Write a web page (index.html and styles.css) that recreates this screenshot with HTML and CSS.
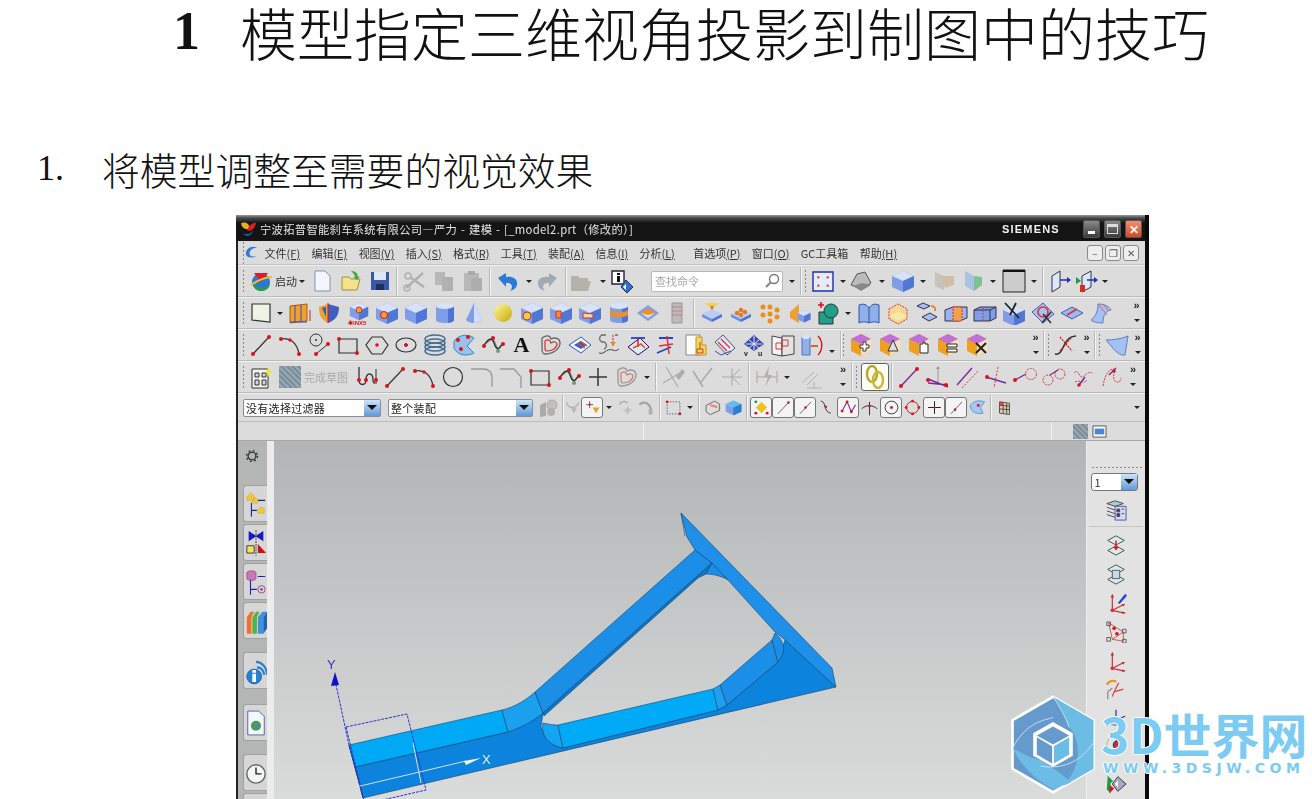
FILE: index.html
```html
<!DOCTYPE html>
<html lang="zh-CN">
<head>
    <meta charset="UTF-8">
    <title>模型指定三维视角投影到制图中的技巧</title>
    <link rel="stylesheet" href="styles.css">
</head>
<body>
<svg class="defs" width="0" height="0">
    <defs>
        <linearGradient id="ball" x1="0" y1="0" x2="1" y2="1"><stop offset="0" stop-color="#fff6a0"/><stop offset="1" stop-color="#c8a800"/></linearGradient>
    </defs>
    <symbol id="cube" viewBox="0 0 24 24"><path d="M12 2l11 5v11l-11 5-11-5V7z" fill="#7f9de8"/><path d="M12 2l11 5-11 5-11-5z" fill="#d8e3fb"/><path d="M12 12l11-5v11l-11 5z" fill="#5077d6"/></symbol>
    <symbol id="cyl" viewBox="0 0 24 24"><path d="M3 5v14c0 4 18 4 18 0V5z" fill="#7f9de8"/><path d="M15 5v17c3-.4 6-1.500 6-3V5z" fill="#4f73d4"/><ellipse cx="12" cy="5" rx="9" ry="3" fill="#d8e3fb"/></symbol>
    <symbol id="slab" viewBox="0 0 24 24"><path d="M2 16l10-5 10 5-10 5z" fill="#b9cdf6"/><path d="M2 16v3l10 5v-3z" fill="#6f8fdf"/><path d="M22 16v3l-10 5v-3z" fill="#4f73d4"/></symbol>
    <symbol id="line" viewBox="0 0 24 24"><path d="M4 21L20 4" stroke="#333" stroke-width="1.200" fill="none"/><circle cx="4" cy="21" r="2" fill="#d8141c"/><circle cx="20" cy="4" r="2" fill="#d8141c"/></symbol>
    <symbol id="arc" viewBox="0 0 24 24"><path d="M3 6c8-2 16 3 18 15" stroke="#333" stroke-width="1.200" fill="none"/><circle cx="3" cy="6" r="2" fill="#d8141c"/><circle cx="12" cy="7" r="1.700" fill="#d8141c"/><circle cx="21" cy="21" r="2" fill="#d8141c"/></symbol>
    <symbol id="rect" viewBox="0 0 24 24"><path d="M3 6h18v14H3z" stroke="#333" stroke-width="1.200" fill="none"/><circle cx="3" cy="6" r="2" fill="#d8141c"/><circle cx="21" cy="20" r="2" fill="#d8141c"/></symbol>
    <symbol id="spline" viewBox="0 0 24 24"><path d="M2 13L12 5l5 12 5-6" stroke="#8b8b8b" stroke-width="1.200" fill="none"/><path d="M3 12c5-7 8-8 10-2s4 8 8 1" stroke="#222" stroke-width="1.200" fill="none"/><circle cx="3" cy="13" r="2" fill="#d8141c"/><circle cx="12" cy="5" r="2" fill="#d8141c"/><circle cx="17" cy="18" r="2" fill="#6aa06a"/><circle cx="22" cy="11" r="2" fill="#d8141c"/></symbol>
    <symbol id="heart" viewBox="0 0 24 24"><path d="M3 5c4-3 8-3 9 1 4-2 9-1 9 4 0 6-7 11-15 11-3 0-3-3-3-6z" fill="none" stroke="#666" stroke-width="1.300"/><path d="M6 8c3-2 5-1 6 2 3-2 6-1 6 1 0 4-5 7-10 7-2 0-2-2-2-4z" fill="none" stroke="#c33" stroke-width="1.200"/></symbol>
    <symbol id="cubeO" viewBox="0 0 24 24"><path d="M12 1l10 5v12l-10 5-10-5V6z" fill="#f0a020"/><path d="M12 1l10 5-10 5L2 6z" fill="#c070d8"/><path d="M12 11l10-5v12l-10 5z" fill="#f6e2c0"/></symbol>
    <symbol id="axes" viewBox="0 0 24 24"><path d="M8 20V5M8 20l12-6M8 20l13 3" stroke="#c8323c" stroke-width="1.300" fill="none"/><circle cx="8" cy="20" r="2" fill="#c8323c"/><path d="M8 2l-2 4h4zM22 13l-4 0 2 3zM23 23l-4-2v3z" fill="#c8323c"/></symbol>
    <symbol id="plane2" viewBox="0 0 24 24"><path d="M3 7l9-5 9 5-9 5zM3 18l9-5 9 5-9 5z" fill="#d6efe4" stroke="#445"/></symbol>
</svg>

<div class="page">
    <h1 class="doc-title"><span class="doc-num">1</span><span>模型指定三维视角投影到制图中的技巧</span></h1>
    <h2 class="doc-step"><span class="step-num">1.</span><span>将模型调整至需要的视觉效果</span></h2>

    <div class="nx">
        <div class="titlebar">
            <svg class="logo" viewBox="0 0 18 16"><path d="M1 2c5-2 9 0 9 6-5 1-8-1-9-6z" fill="#e8b020"/><path d="M17 1c-1 6-4 9-9 9 0-5 4-8 9-9z" fill="#d8201c"/><path d="M3 12c4 3 8 2 11-3-2 7-8 8-11 3z" fill="#2a70d0"/></svg>
            <span class="title-text">宁波拓普智能刹车系统有限公司—严力 - 建模 - [_model2.prt（修改的）]</span>
            <span class="siemens">SIEMENS</span>
            <span class="winbtn"><i class="g-min"></i></span>
            <span class="winbtn"><i class="g-max"></i></span>
            <span class="winbtn close">✕</span>
        </div>

        <div class="menubar">
            <span class="grip"></span>
            <svg class="menu-logo" viewBox="0 0 16 16"><path d="M14 3c-6-3-12 1-12 6 0 4 5 6 12 3-5 1-8 0-8-3 0-3 3-6 8-6z" fill="#3478d8"/></svg>
            <span class="m">文件<u>(F)</u></span>
            <span class="m">编辑<u>(E)</u></span>
            <span class="m">视图<u>(V)</u></span>
            <span class="m">插入<u>(S)</u></span>
            <span class="m">格式<u>(R)</u></span>
            <span class="m">工具<u>(T)</u></span>
            <span class="m">装配<u>(A)</u></span>
            <span class="m">信息<u>(I)</u></span>
            <span class="m">分析<u>(L)</u></span>
            <span class="m m-gap">首选项<u>(P)</u></span>
            <span class="m">窗口<u>(O)</u></span>
            <span class="m">GC工具箱</span>
            <span class="m">帮助<u>(H)</u></span>
            <span class="mdi"><span class="mdi-btn">–</span><span class="mdi-btn">❐</span><span class="mdi-btn">✕</span></span>
        </div>

        <div class="bar">
            <span class="grip"></span>
            <svg class="i" viewBox="0 0 24 24"><circle cx="12" cy="13" r="9" fill="#2a78d0"/><path d="M3 13c3 6 12 8 18 2-1 6-6 7-9 7-5 0-8-4-9-9z" fill="#2e9a50"/><path d="M5 4h14l-7 9z" fill="#d8202c"/><path d="M2 16C8 12 16 8 23 8" stroke="#f0c020" stroke-width="2" fill="none"/></svg>
            <span class="btn-label">启动</span><span class="caret nar"></span>
            <svg class="i" viewBox="0 0 24 24"><path d="M5 2h10l5 5v15H5z" fill="#f4f6ff" stroke="#8090c0"/></svg>
            <svg class="i" viewBox="0 0 24 24"><path d="M3 8h7l2 2h9l-3 11H3z" fill="#f2e28a" stroke="#a09040"/><path d="M12 2c4 0 7 2 7 6l2-1-3 4-4-3h2c0-2-2-4-4-6z" fill="#46a840"/></svg>
            <svg class="i" viewBox="0 0 24 24"><path d="M3 3h18v18H3z" fill="#3858a8"/><path d="M6 3h12v8H6z" fill="#dfe8f8"/><path d="M8 15h8v6H8z" fill="#20305c"/></svg>
            <span class="sep"></span>
            <svg class="i dim" viewBox="0 0 24 24"><path d="M3 19L20 4M7 8l14 10" stroke="#777" stroke-width="2.400" fill="none"/><circle cx="4" cy="19" r="3" fill="none" stroke="#777" stroke-width="1.500"/><circle cx="5" cy="7" r="3" fill="none" stroke="#777" stroke-width="1.500"/></svg>
            <svg class="i dim" viewBox="0 0 24 24"><path d="M3 3h10v13H3z" fill="#888"/><path d="M10 8h11v14H10z" fill="#777"/></svg>
            <svg class="i dim" viewBox="0 0 24 24"><path d="M3 4h15v18H3z" fill="#888"/><path d="M7 2h7v4H7z" fill="#666"/><path d="M10 9h11v13H10z" fill="#6f6f6f"/></svg>
            <span class="sep"></span>
            <svg class="i tight m-x3" viewBox="0 0 24 24"><path d="M2 9l8-5v4c7-1 12 2 11 8-1 3-3 5-7 6 3-3 3-9-4-8v4z" fill="#2a7ad8"/></svg>
            <span class="caret"></span>
            <svg class="i tight dim m-r4" viewBox="0 0 24 24"><path d="M22 9l-8-5v4C7 7 2 10 3 16c1 3 3 5 7 6-3-3-3-9 4-8v4z" fill="#3a6a90"/></svg>
            <span class="sep"></span>
            <svg class="i tight dim m-r4" viewBox="0 0 24 24"><path d="M2 7h7l2 2h8v3h3l-3 10H2z" fill="#7d7a58"/></svg>
            <span class="caret"></span>
            <svg class="i tight m-l1" viewBox="0 0 24 24"><path d="M2 2h12v13H2z" fill="#fff" stroke="#223" stroke-width="1.400"/><path d="M7 4h3v2H7zM7 7h3v6H7z" fill="#111"/><path d="M16 11l7 7-6 6-6-6z" fill="#2e6fd8" stroke="#234"/><path d="M16 15l-3 3 3 3z" fill="#fff"/></svg>
            <span class="search"><span>查找命令</span><svg class="mag" viewBox="0 0 16 16"><circle cx="10" cy="6" r="4.500" fill="#fff" stroke="#777" stroke-width="1.400"/><path d="M7 9l-5 5" stroke="#888" stroke-width="2.200"/></svg></span>
            <span class="caret m-l3"></span>
            <span class="sep"></span>
            <span class="grip"></span>
            <svg class="i" viewBox="0 0 24 24"><path d="M2 3h20v19H2z" fill="#e4ecfb" stroke="#2030a0" stroke-width="1.400"/><path d="M6 7l3 1-2 2zM18 7l-3 1 2 2zM6 18l3-1-2-2zM18 18l-3-1 2-2z" fill="#d82c1c"/></svg>
            <span class="caret"></span>
            <svg class="i tight m-r3" viewBox="0 0 24 24"><path d="M2 16L8 5l8-2 6 11-10 6z" fill="#bbb" stroke="#555"/><path d="M4 17l8 5 10-6-9-2z" fill="#888"/></svg>
            <span class="caret"></span>
            <svg class="i" viewBox="0 0 24 24"><use href="#cube"/></svg>
            <span class="caret"></span>
            <svg class="i dim" viewBox="0 0 24 24"><path d="M3 3l9 4v14l-9-4z" fill="#b0a080"/><path d="M10 7h12v9l-9 3z" fill="#f09020"/></svg>
            <svg class="i dim2" viewBox="0 0 24 24"><path d="M4 2l9 5v15l-9-5z" fill="#8eb0e8"/><path d="M13 7l8 1v8l-8 6z" fill="#40b060"/></svg>
            <span class="caret"></span>
            <svg class="i" viewBox="0 0 24 24"><path d="M1 1h22v22H1z" fill="#ccc" stroke="#222"/><path d="M1 1h22v2H1z" fill="#111"/></svg>
            <span class="caret"></span>
            <span class="sep"></span>
            <svg class="i" viewBox="0 0 24 24"><path d="M3 7l8-5v16l-8 5z" fill="#dbe8fb" stroke="#334"/><path d="M11 11h9" stroke="#1c2cc8" stroke-width="1.500"/><path d="M22 11l-4-3v6z" fill="#1c2cc8"/></svg>
            <svg class="i tight" viewBox="0 0 24 24"><path d="M7 7l9-5v16l-9 5z" fill="#dbe8fb" stroke="#334"/><path d="M1 8l5 4-5 3z" fill="#1c9c3c"/><path d="M5 16h5v7H5z" fill="#d82c1c"/><path d="M12 11h8" stroke="#1c2cc8" stroke-width="1.500"/><path d="M23 11l-4-3v6z" fill="#1c2cc8"/></svg>
            <span class="caret"></span>
        </div>

        <div class="bar">
            <span class="grip"></span>
            <svg class="i" viewBox="0 0 24 24"><path d="M3 3h18v18L3 19z" fill="#eef3e8" stroke="#333" stroke-width="1.200"/></svg>
            <span class="caret nar"></span>
            <svg class="i" viewBox="0 0 24 24"><path d="M2 5l17-2v17L2 22z" fill="#f0a030" stroke="#a06010"/><path d="M7 4v18M13 4v17M2 21h17" stroke="#3a4cb0"/><path d="M22 20V9" stroke="#d8141c"/></svg>
            <svg class="i" viewBox="0 0 24 24"><path d="M2 6l9-3v19c-7-3-9-8-9-16z" fill="#f0a030"/><path d="M11 3l11 3c0 8-3 13-11 16z" fill="#4060c0"/><path d="M11 2v20" stroke="#d8141c"/><path d="M5 7l4-1v10z" fill="#2a60c0"/></svg>
            <svg class="i" viewBox="0 0 24 24"><use href="#cube" width="20" height="20" x="3" y="0"/><circle cx="13" cy="9" r="3" fill="#f0a030" stroke="#c33"/><text x="2" y="23.500" class="nx5">✱|NX5</text></svg>
            <svg class="i" viewBox="0 0 24 24"><use href="#cube"/><circle cx="9" cy="14" r="3.500" fill="#f0a030" stroke="#d8141c"/></svg>
            <svg class="i" viewBox="0 0 24 24"><use href="#cube"/></svg>
            <svg class="i" viewBox="0 0 24 24"><use href="#cyl"/></svg>
            <svg class="i" viewBox="0 0 24 24"><path d="M12 2l8 17c-3 4-13 4-16 0z" fill="#7f9de8"/><path d="M12 2l8 17c-2 2-5 3-8 3z" fill="#cfdcfa"/></svg>
            <svg class="i" viewBox="0 0 24 24"><circle cx="12" cy="12" r="9" fill="url(#ball)"/></svg>
            <svg class="i" viewBox="0 0 24 24"><use href="#cube"/><circle cx="7" cy="15" r="4" fill="#f0d040" stroke="#c33"/></svg>
            <svg class="i" viewBox="0 0 24 24"><use href="#cube"/><path d="M7 10h5v7H7z" fill="#f09020" stroke="#c33"/></svg>
            <svg class="i" viewBox="0 0 24 24"><use href="#cube"/><path d="M5 12l10 1v4H5z" fill="#f6d8a0" stroke="#c33"/></svg>
            <svg class="i" viewBox="0 0 24 24"><use href="#cyl"/><path d="M3 9c3 3 15 3 18 0v5c-3 3-15 3-18 0z" fill="#e89030"/></svg>
            <svg class="i" viewBox="0 0 24 24"><path d="M1 12l11-8 11 8-11 8z" fill="#7f9de8"/><path d="M5 12l7-5 7 5-7 5z" fill="#f09020"/><path d="M5 12l7 2 7-2-7 5z" fill="#d8e3fb"/></svg>
            <svg class="i dim3" viewBox="0 0 24 24"><path d="M7 2h10v20H7z" fill="#b4b4b4" stroke="#888"/><path d="M7 6h10M7 10h10M7 14h10" stroke="#c66"/></svg>
            <span class="sep"></span>
            <svg class="i" viewBox="0 0 24 24"><path d="M5 2h14l-5 4h-4z" fill="#f6cf50"/><path d="M12 5v10" stroke="#e8641c" stroke-width="2.400"/><use href="#slab" y="-3"/></svg>
            <svg class="i" viewBox="0 0 24 24"><use href="#slab" y="-3"/><circle cx="8" cy="12" r="2.200" fill="#e87820"/><circle cx="12" cy="9" r="2.200" fill="#e87820"/><circle cx="12" cy="14" r="2.200" fill="#e87820"/><circle cx="16" cy="11" r="2.200" fill="#e87820"/></svg>
            <svg class="i" viewBox="0 0 24 24"><circle cx="5" cy="6" r="2.500" fill="#e89020"/><circle cx="12" cy="6" r="2.500" fill="#e89020"/><circle cx="19" cy="9" r="2.500" fill="#e89020"/><circle cx="5" cy="14" r="2.500" fill="#e89020"/><circle cx="12" cy="13" r="2.500" fill="#e89020"/><circle cx="19" cy="16" r="2.500" fill="#e89020"/><circle cx="12" cy="20" r="2.500" fill="#e89020"/></svg>
            <svg class="i" viewBox="0 0 24 24"><path d="M3 11l9-8v19l-9-5z" fill="#f0a030"/><use href="#cube" width="14" height="14" x="10" y="8"/></svg>
            <svg class="i" viewBox="0 0 24 24"><path d="M3 11h14v12H3z" fill="#20a088" stroke="#333"/><circle cx="15" cy="10" r="7" fill="#20a088" stroke="#333"/><path d="M5 1v6M2 4h6" stroke="#d8141c" stroke-width="1.600"/></svg>
            <span class="caret"></span>
            <svg class="i" viewBox="0 0 24 24"><path d="M2 4c5-2 8 0 10 3 2-3 5-5 10-3v18c-4-2-8-1-10 0-2-1-6-2-10 0z" fill="#8fb0e8" stroke="#2a50b0"/><path d="M12 7v15" stroke="#2a50b0"/></svg>
            <svg class="i" viewBox="0 0 24 24"><path d="M3 8l9-5 9 5v10l-9 5-9-5z" fill="#f6d890" stroke="#d03838" stroke-dasharray="2 1"/><path d="M3 15l9-4 9 4-9 5z" fill="#f8e8a8"/></svg>
            <svg class="i" viewBox="0 0 24 24"><path d="M2 5l6-3 7 3-6 3z" fill="#a8c0f0" stroke="#334"/><path d="M7 16l8-4 7 4-8 4z" fill="#a8c0f0" stroke="#334"/><path d="M16 5c3 0 5 2 4 5" stroke="#e88020" stroke-width="1.800" fill="none"/></svg>
            <svg class="i" viewBox="0 0 24 24"><path d="M1 9l8-3h14v11l-8 3H1z" fill="#9cb4ec" stroke="#334"/><path d="M9 6h9v14H9z" fill="#f0a050" stroke="#c33" stroke-dasharray="2 1"/></svg>
            <svg class="i" viewBox="0 0 24 24"><path d="M1 9l6-3h16v11l-6 3H1z" fill="#7f9de8" stroke="#334"/><path d="M1 9h16v11M17 9l6-3" stroke="#334" fill="none"/><path d="M10 6v14" stroke="#d03838" stroke-dasharray="2 1"/></svg>
            <svg class="i" viewBox="0 0 24 24"><use href="#cube" y="2"/><path d="M3 2l14 15M14 2L8 14" stroke="#222" stroke-width="1.800"/></svg>
            <svg class="i" viewBox="0 0 24 24"><path d="M1 11l11-9 11 11-11 9z" fill="#aac0f0" stroke="#4060b0"/><circle cx="12" cy="11" r="5" fill="none" stroke="#e03030" stroke-width="1.600"/><path d="M12 13l8 9M20 11l-9 11" stroke="#333" stroke-width="1.600"/></svg>
            <svg class="i" viewBox="0 0 24 24"><path d="M1 12l11-6 11 6-11 6z" fill="#9cb8f0" stroke="#4060b0"/><path d="M7 14l10-6" stroke="#e03030" stroke-width="1.600"/></svg>
            <svg class="i" viewBox="0 0 24 24"><path d="M9 3c6 0 11 2 13 6-6 1-8 6-8 13-5 0-10-1-12-3 5-4 7-9 7-16z" fill="#a4c0f4" stroke="#6080c0"/><path d="M9 3l9 11M14 3l5 6" stroke="#e0605c"/></svg>
            <span class="chev end"><b>»</b><em></em></span>
        </div>

        <div class="bar">
            <span class="grip"></span>
            <svg class="i" viewBox="0 0 24 24"><use href="#line"/></svg>
            <svg class="i" viewBox="0 0 24 24"><use href="#arc"/></svg>
            <svg class="i" viewBox="0 0 24 24"><circle cx="9" cy="7" r="6" fill="none" stroke="#333"/><circle cx="9" cy="7" r="1" fill="#333"/><path d="M9 21L21 11" stroke="#333"/><circle cx="9" cy="21" r="2" fill="#d8141c"/><circle cx="21" cy="11" r="2" fill="#d8141c"/></svg>
            <svg class="i" viewBox="0 0 24 24"><use href="#rect"/></svg>
            <svg class="i" viewBox="0 0 24 24"><path d="M7 4h10l6 8-6 9H7l-6-9z" fill="none" stroke="#333" stroke-width="1.200"/><circle cx="12" cy="12" r="1.800" fill="#d8141c"/></svg>
            <svg class="i" viewBox="0 0 24 24"><ellipse cx="12" cy="12" rx="10" ry="7" fill="none" stroke="#333" stroke-width="1.200"/><path d="M10 12h4M12 10v4" stroke="#d8141c" stroke-width="2"/></svg>
            <svg class="i" viewBox="0 0 24 24"><ellipse cx="12" cy="6" rx="10" ry="4" fill="none" stroke="#456e90" stroke-width="1.500"/><ellipse cx="12" cy="10" rx="10" ry="4" fill="none" stroke="#456e90" stroke-width="1.500"/><ellipse cx="12" cy="14" rx="10" ry="4" fill="none" stroke="#456e90" stroke-width="1.500"/><ellipse cx="12" cy="18" rx="10" ry="4" fill="none" stroke="#456e90" stroke-width="1.500"/></svg>
            <svg class="i" viewBox="0 0 24 24"><path d="M2 8c6-7 14-7 20-3l-7 8 7 7c-8 4-17 2-20-5z" fill="#9cc0ec" stroke="#2890c0"/><circle cx="6" cy="7" r="2" fill="#d8141c"/><circle cx="16" cy="4" r="2" fill="#d8141c"/><circle cx="9" cy="16" r="2" fill="#d8141c"/></svg>
            <svg class="i" viewBox="0 0 24 24"><use href="#spline"/></svg>
            <span class="letter">A</span>
            <svg class="i" viewBox="0 0 24 24"><use href="#heart"/></svg>
            <svg class="i" viewBox="0 0 24 24"><path d="M1 12L13 4l10 8-10 8z" fill="#f4f4ff" stroke="#2a60c0"/><path d="M6 12l7-4 6 4-6 4z" fill="#2a60c0"/><path d="M9 10l8 5M12 8l7 5" stroke="#e8502c" stroke-width="1.400"/></svg>
            <svg class="i" viewBox="0 0 24 24"><path d="M2 20c6 2 6-5 14-3 2 1 3 1 6-1" fill="none" stroke="#444"/><path d="M9 2H5c-3 0-3 7 0 7h2c3 0 3 7 0 7" fill="none" stroke="#333"/><path d="M16 2v11" stroke="#d8141c" stroke-dasharray="2 1"/><path d="M13 9h6l-3 4z" fill="#e89020"/><path d="M18 2h3" stroke="#333"/></svg>
            <svg class="i" viewBox="0 0 24 24"><path d="M2 14l12-9 9 9-11 8z" fill="#d8ecf2" stroke="#406"/><path d="M5 5h14" stroke="#2244cc" stroke-width="1.800"/><path d="M12 5v9" stroke="#d8141c" stroke-width="1.400"/><path d="M7 15l8-4 4 4" stroke="#e8502c" stroke-width="1.600" fill="none"/></svg>
            <svg class="i" viewBox="0 0 24 24"><path d="M4 5h14M2 20l14-6" stroke="#2244cc" stroke-width="1.800"/><path d="M4 13l14-2M12 3l2 18" stroke="#e03030" stroke-width="1.500"/></svg>
            <svg class="i" viewBox="0 0 24 24"><path d="M2 2h14v20H2z" fill="#fdfdfd" stroke="#888"/><path d="M12 4h6v8h4v10H12z" fill="#f0dc50" stroke="#c84"/><path d="M13 16h6v4h-6zM16 9v7" stroke="#d03838" fill="none"/></svg>
            <svg class="i" viewBox="0 0 24 24"><path d="M2 9l8-7 12 13-8 7z" fill="#dce8f8" stroke="#556"/><path d="M5 9l9 9M8 6l9 9" stroke="#e03030" stroke-width="1.300"/><path d="M2 18l6 4 10-4" stroke="#4050a0" fill="none"/></svg>
            <svg class="i" viewBox="0 0 24 24"><path d="M2 11l10-9 10 9-10 7z" fill="#3848a8"/><path d="M4 11l16 0M7 7l10 8M12 3v14M17 7L7 15" stroke="#e8e8ff"/><text x="2" y="22.500" class="uv">v</text><text x="16" y="22.500" class="uv">u</text></svg>
            <svg class="i" viewBox="0 0 24 24"><path d="M1 3l10 2v18L1 21z" fill="#f4f4f4" stroke="#444"/><path d="M11 3h12v18l-12 2z" fill="#e4e4e4" stroke="#444"/><path d="M5 10h6v6H5zM11 7h6v6h-6z" fill="none" stroke="#d03838"/></svg>
            <svg class="i" viewBox="0 0 24 24"><path d="M2 4h8v18H2z" fill="#8fb0e8" stroke="#5070c0"/><ellipse cx="6" cy="4" rx="4" ry="2" fill="#d8e3fb"/><path d="M11 13h7" stroke="#e86020" stroke-width="2"/><path d="M18 3c5 5 5 14 0 19" stroke="#d8141c" fill="none" stroke-width="1.400"/></svg>
            <span class="caret low"></span>
            <span class="sep pull"></span>
            <span class="grip"></span>
            <svg class="i" viewBox="0 0 24 24"><use href="#cubeO"/><path d="M14 9h3v3h3v3h-3v3h-3v-3h-3v-3h3z" fill="#fff" stroke="#333"/></svg>
            <svg class="i" viewBox="0 0 24 24"><use href="#cubeO"/><path d="M15 7l5 11h-10z" fill="#ddd" stroke="#333"/></svg>
            <svg class="i" viewBox="0 0 24 24"><use href="#cubeO"/><path d="M13 11h3v-2h2v2h3v9h-8z" fill="#fff" stroke="#222"/></svg>
            <svg class="i" viewBox="0 0 24 24"><use href="#cubeO"/><path d="M11 11h10v3H11zM11 16h10v3H11z" fill="#fff" stroke="#222"/></svg>
            <svg class="i" viewBox="0 0 24 24"><use href="#cubeO"/><path d="M11 10l10 10M21 10L11 20" stroke="#222" stroke-width="2"/></svg>
            <span class="chev far"><b>»</b><em></em></span>
            <span class="sep"></span>
            <span class="grip"></span>
            <svg class="i" viewBox="0 0 24 24"><path d="M1 21c10 2 6-17 21-18" fill="none" stroke="#333" stroke-width="1.500"/><path d="M6 4l12 14M6 18L18 4" stroke="#d8141c" stroke-dasharray="2 1" stroke-width="1.200"/></svg>
            <span class="chev"><b>»</b><em></em></span>
            <span class="sep"></span>
            <span class="grip"></span>
            <svg class="i" viewBox="0 0 24 24"><path d="M1 7c7 0 15-1 22-4l-3 19c-5 1-10-4-13-8z" fill="#a4c0f4" stroke="#6080c0"/></svg>
            <span class="chev"><b>»</b><em></em></span>
        </div>

        <div class="bar">
            <span class="grip"></span>
            <svg class="i" viewBox="0 0 24 24"><path d="M3 4h16v19H3z" fill="#f4f4e8" stroke="#333"/><path d="M6 8h4v4H6zM13 8h4v4h-4zM6 15h4v5H6zM13 15h4v5h-4z" fill="#d0d8e0" stroke="#333"/><path d="M19 2l2 4 3 1-3 1-2 4-1-4-3-1 3-1z" fill="#f4e030"/></svg>
            <span class="sq-done"></span>
            <span class="done-label">完成草图</span>
            <svg class="i tight" viewBox="0 0 24 24"><path d="M3 2v13c0 6 7 6 7 0 0-8 7-8 7 0 0 3 2 3 2 3" fill="none" stroke="#333" stroke-width="1.300"/><path d="M20 4v15" stroke="#333"/><circle cx="3" cy="15" r="2" fill="#d8141c"/><circle cx="10" cy="15" r="2" fill="#d8141c"/><circle cx="20" cy="15" r="2" fill="#d8141c"/></svg>
            <svg class="i" viewBox="0 0 24 24"><use href="#line"/></svg>
            <svg class="i" viewBox="0 0 24 24"><use href="#arc"/></svg>
            <svg class="i" viewBox="0 0 24 24"><circle cx="12" cy="12" r="9.500" fill="none" stroke="#333" stroke-width="1.200"/></svg>
            <svg class="i" viewBox="0 0 24 24"><path d="M1 4h12c6 0 9 3 9 9v9" fill="none" stroke="#999" stroke-width="1.300"/></svg>
            <svg class="i" viewBox="0 0 24 24"><path d="M1 4h14l7 8v11" fill="none" stroke="#999" stroke-width="1.300"/></svg>
            <svg class="i" viewBox="0 0 24 24"><use href="#rect"/></svg>
            <svg class="i" viewBox="0 0 24 24"><use href="#spline"/></svg>
            <svg class="i" viewBox="0 0 24 24"><path d="M12 3v18M3 12h18" stroke="#333" stroke-width="1.500"/></svg>
            <svg class="i dim2" viewBox="0 0 24 24"><use href="#heart"/></svg>
            <span class="caret"></span>
            <span class="sep"></span>
            <svg class="i dim" viewBox="0 0 24 24"><path d="M4 2l12 20M1 18L18 8" stroke="#666" stroke-width="1.200"/><path d="M14 12l6-8 3 3-6 8z" fill="#667a40"/></svg>
            <svg class="i dim" viewBox="0 0 24 24"><path d="M2 6l10 16M10 17L21 3" stroke="#666" stroke-width="1.600"/></svg>
            <svg class="i dim" viewBox="0 0 24 24"><path d="M12 3v18M2 12h20M12 12l8-8M12 12l8 8" stroke="#666"/></svg>
            <span class="sep"></span>
            <svg class="i dim" viewBox="0 0 24 24"><path d="M2 6v12M22 6v12M2 12h20" stroke="#a44" fill="none"/><path d="M14 1l-5 11h4l-3 10 7-12h-4z" fill="#777"/></svg>
            <span class="caret"></span>
            <svg class="i dim push-a" viewBox="0 0 24 24"><path d="M3 18L15 7M8 20L19 9M8 23h15M15 17v6" stroke="#777" fill="none"/></svg>
            <span class="chev near"><b>»</b><em></em></span>
            <span class="sep"></span>
            <span class="grip"></span>
            <span class="link-btn"><svg class="i" viewBox="0 0 24 24"><ellipse cx="9" cy="9" rx="5" ry="8" fill="none" stroke="#b8a828" stroke-width="2.400"/><ellipse cx="15" cy="15" rx="5" ry="8" fill="none" stroke="#c8b838" stroke-width="2.400"/></svg></span>
            <span class="sep"></span>
            <svg class="i" viewBox="0 0 24 24"><path d="M4 21L20 4" stroke="#7a2a9a" stroke-width="1.400"/><circle cx="4" cy="21" r="2" fill="#d8141c"/><circle cx="20" cy="4" r="2" fill="#d8141c"/></svg>
            <svg class="i" viewBox="0 0 24 24"><path d="M12 18V3" stroke="#999"/><path d="M10 4l2-3 2 3z" fill="#999"/><path d="M2 14l20 8M2 18l20 2" stroke="#7a2a9a" stroke-width="1.400"/><circle cx="2" cy="15" r="2" fill="#d8141c"/><circle cx="20" cy="20" r="2" fill="#d8141c"/></svg>
            <svg class="i" viewBox="0 0 24 24"><path d="M2 20L17 3" stroke="#7a2a9a" stroke-width="1.400"/><path d="M7 23L23 6" stroke="#d04040" stroke-dasharray="2 1.500"/></svg>
            <svg class="i" viewBox="0 0 24 24"><path d="M2 12l20 6" stroke="#7a2a9a" stroke-width="1.400"/><path d="M14 2L10 23" stroke="#d04040" stroke-dasharray="2 1.500"/><circle cx="3" cy="12" r="2" fill="#d8141c"/></svg>
            <svg class="i" viewBox="0 0 24 24"><path d="M2 15L13 9" stroke="#7a2a9a" stroke-width="1.400"/><circle cx="18" cy="9" r="5.500" fill="none" stroke="#d04040" stroke-dasharray="2 1"/><circle cx="2" cy="15" r="2" fill="#d8141c"/></svg>
            <svg class="i" viewBox="0 0 24 24"><circle cx="6" cy="15" r="5" fill="none" stroke="#d04040" stroke-dasharray="2 1"/><circle cx="18" cy="9" r="5" fill="none" stroke="#d04040" stroke-dasharray="2 1"/><path d="M8 10l8-5" stroke="#7a2a9a" stroke-width="1.200"/></svg>
            <svg class="i" viewBox="0 0 24 24"><path d="M3 8c5-6 5 8 10 3s8-4 9-2M4 17c6-3 8 3 12-2" fill="none" stroke="#d04040" stroke-dasharray="2 1"/><path d="M8 20l6-8" stroke="#7a2a9a" stroke-width="1.500"/><circle cx="8" cy="20" r="1.800" fill="#d8141c"/></svg>
            <svg class="i" viewBox="0 0 24 24"><path d="M3 21C5 10 8 5 13 4c4 0-2 8 2 12 3 3 6 0 6-3" fill="none" stroke="#d04040" stroke-dasharray="2 1"/><path d="M9 10l7-7" stroke="#7a2a9a" stroke-width="1.500"/><circle cx="14" cy="6" r="1.800" fill="#d8141c"/></svg>
            <span class="chev"><b>»</b><em></em></span>
        </div>

        <div class="bar filter">
            <span class="sel sel-a"><span>没有选择过滤器</span><i></i></span>
            <span class="sel sel-b"><span>整个装配</span><i></i></span>
            <svg class="i tight dim" viewBox="0 0 24 24"><path d="M4 9l6-3v14l-6 1z" fill="#666"/><circle cx="16" cy="9" r="5" fill="#a49a70" stroke="#666"/><circle cx="15" cy="16" r="4" fill="#777"/></svg>
            <span class="sep"></span>
            <svg class="i s first dim" viewBox="0 0 24 24"><path d="M3 5c3 7 9 7 9 7s5 0 9-7" fill="none" stroke="#777" stroke-width="2"/><path d="M10 13h8l-4 7z" fill="#a08030"/></svg>
            <span class="btn"><svg class="i s" viewBox="0 0 24 24"><path d="M8 3v10M3 8h10" stroke="#333"/><path d="M12 12h10l-5 8z" fill="#f0a030"/><circle cx="8" cy="8" r="1.500" fill="#d8141c"/></svg></span>
            <span class="caret"></span>
            <svg class="i s dim" viewBox="0 0 24 24"><path d="M3 8c3-5 9-6 12-2" fill="none" stroke="#777" stroke-width="2"/><path d="M15 10v12M9 16h12" stroke="#777"/><circle cx="15" cy="16" r="3" fill="none" stroke="#777"/></svg>
            <svg class="i s dim" viewBox="0 0 24 24"><path d="M2 8c5-5 12-3 15 3 2 4 2 7 2 10" fill="none" stroke="#555" stroke-width="3"/><path d="M15 14h5v8h-5z" fill="#777"/></svg>
            <span class="sep"></span>
            <svg class="i s" viewBox="0 0 24 24"><path d="M3 4h18v17H3z" fill="none" stroke="#333" stroke-dasharray="2 2"/><circle cx="3" cy="4" r="2" fill="#d8141c"/><circle cx="21" cy="21" r="2" fill="#d8141c"/></svg>
            <span class="caret"></span>
            <span class="sep"></span>
            <svg class="i s" viewBox="0 0 24 24"><path d="M3 9l12-6 7 4v9l-13 6-6-4z" fill="#ddd" stroke="#444"/><path d="M9 7l11 3-2 3-10-3z" fill="#e88"/></svg>
            <svg class="i s" viewBox="0 0 24 24"><use href="#cube"/><path d="M12 2L1 7l11 5 11-5z" fill="#66b8f0"/><path d="M12 23V12l11-5v11z" fill="#2a80d0"/></svg>
            <span class="sep"></span>
            <span class="btn"><svg class="i s" viewBox="0 0 24 24"><path d="M12 4l4 4-4 4-4-4zM12 12l4 4-4 4-4-4zM4 12l4-4 4 4-4 4zM20 12l-4-4-4 4 4 4z" fill="#f0c020"/><circle cx="4" cy="4" r="2" fill="#1c9c3c"/><circle cx="20" cy="20" r="2" fill="#d8141c"/><circle cx="4" cy="20" r="2" fill="#d8141c"/></svg></span>
            <span class="btn"><svg class="i s" viewBox="0 0 24 24"><path d="M4 21L20 4" stroke="#333"/><circle cx="19" cy="5" r="1.800" fill="#d8141c"/></svg></span>
            <span class="btn"><svg class="i s" viewBox="0 0 24 24"><path d="M4 21L20 4" stroke="#333"/><circle cx="12" cy="12" r="1.800" fill="#d8141c"/></svg></span>
            <svg class="i s" viewBox="0 0 24 24"><path d="M4 3c8 0 3 15 14 17" fill="none" stroke="#333" stroke-width="1.400"/><circle cx="11" cy="11" r="1.800" fill="#d8141c"/></svg>
            <span class="btn"><svg class="i s" viewBox="0 0 24 24"><path d="M3 17L10 4l6 14 6-10" fill="none" stroke="#7a2a9a" stroke-width="1.500"/><circle cx="3" cy="17" r="2" fill="#d8141c"/><circle cx="10" cy="4" r="2" fill="#d8141c"/><circle cx="16" cy="18" r="2" fill="#d8141c"/></svg></span>
            <svg class="i s" viewBox="0 0 24 24"><path d="M1 14c5-6 16-6 22 0M12 4v19" fill="none" stroke="#333" stroke-width="1.400"/><circle cx="12" cy="10" r="2" fill="#d8141c"/></svg>
            <span class="btn"><svg class="i s" viewBox="0 0 24 24"><circle cx="12" cy="12" r="9" fill="none" stroke="#333" stroke-width="1.300"/><circle cx="12" cy="12" r="2" fill="#d8141c"/></svg></span>
            <svg class="i s" viewBox="0 0 24 24"><circle cx="12" cy="12" r="8.500" fill="none" stroke="#a03030" stroke-width="1.400"/><circle cx="12" cy="3" r="2" fill="#d8141c"/><circle cx="12" cy="21" r="2" fill="#d8141c"/><circle cx="3" cy="12" r="2" fill="#d8141c"/><circle cx="21" cy="12" r="2" fill="#d8141c"/></svg>
            <span class="btn"><svg class="i s" viewBox="0 0 24 24"><path d="M12 3v18M3 12h18" stroke="#222" stroke-width="1.400"/><circle cx="12" cy="12" r="1.500" fill="#d8141c"/></svg></span>
            <span class="btn"><svg class="i s" viewBox="0 0 24 24"><path d="M4 21L20 4" stroke="#333"/><circle cx="10" cy="15" r="1.800" fill="#d8141c"/></svg></span>
            <svg class="i s" viewBox="0 0 24 24"><path d="M2 10C5 3 13 1 22 4l-6 8 4 8C10 22 2 18 2 10z" fill="#a4c8f4" stroke="#4080c0"/><circle cx="13" cy="9" r="2" fill="#d8141c"/></svg>
            <span class="sep"></span>
            <svg class="i s" viewBox="0 0 24 24"><path d="M5 4l14 2v16L5 20z" fill="#e0d0b0" stroke="#222"/><path d="M5 9l14 1M5 14l14 1M10 5v15M15 6v15" stroke="#222"/><path d="M5 4h5v5H5z" fill="#c44"/></svg>
            <span class="caret far"></span>
        </div>

        <div class="statusbar">
            <span class="st-a"></span>
            <span class="st-b">
                <span class="st-rule"></span>
                <span class="st-hatch"></span>
                <svg class="st-ico" viewBox="0 0 16 16"><path d="M1 2h14v12H1z" fill="#eef3f8" stroke="#555"/><path d="M3 5h10v6H3z" fill="#4a86d8"/></svg>
            </span>
        </div>

        <div class="main">
            <div class="leftpanel">
                <svg class="gear" viewBox="0 0 16 16"><circle cx="8" cy="8" r="4.500" fill="none" stroke="#333" stroke-width="1.500"/><circle cx="8" cy="8" r="6.200" fill="none" stroke="#333" stroke-width="1.600" stroke-dasharray="2 2.900"/></svg>
                <span class="tab"><svg viewBox="0 0 24 32"><path d="M2 8l4-4 4 3v5H2zM8 12l3-3 3 2v4H8zM14 22l3-3 4 2v5h-7z" fill="#f0c840" stroke="#c8a020" stroke-width=".500"/><path d="M7 15v15M7 23h6M14 12h8" stroke="#2020a8" stroke-width="1.200"/></svg></span>
                <span class="tab"><svg viewBox="0 0 24 32"><path d="M4 3l8 5 8-5v11l-8-5-8 5z" fill="#1a1ac0"/><path d="M12 2v28" stroke="#333" stroke-dasharray="2 1"/><path d="M2 19h8v8H2z" fill="#f4e060" stroke="#333"/><path d="M14 27V17l9 10z" fill="#d01010"/></svg></span>
                <span class="tab"><svg viewBox="0 0 24 32"><path d="M2 6c0-3 10-3 10 0v6c0 3-10 3-10 0z" fill="#c878b8" stroke="#804070" stroke-width=".700"/><path d="M14 10h8M6 14v16M6 24h7" stroke="#2020a8" stroke-width="1.200"/><circle cx="18" cy="24" r="4" fill="none" stroke="#a04090"/><circle cx="18" cy="24" r="1.500" fill="#a04090"/></svg></span>
                <span class="tab"><svg viewBox="0 0 24 32"><path d="M2 12l4-6h4l-3 6v18H2z" fill="#f07030"/><path d="M8 12l4-6h4l-3 6v18H8z" fill="#50b840"/><path d="M14 12l5-6h5l-4 6v18h-6z" fill="#4090e0"/><path d="M20 12l4-6v18l-4 6z" fill="#2060b0"/></svg></span>
                <span class="tab gap-a"><svg viewBox="0 0 24 32"><path d="M12 6c6 0 12 6 12 14M13 12c4 0 7 3 8 8" fill="none" stroke="#2a80d0" stroke-width="2.400"/><circle cx="10" cy="22" r="8" fill="#2a80d0" stroke="#1a60a8"/><path d="M8 19h4v9H8zM8 15h4v3H8z" fill="#fff"/></svg></span>
                <span class="tab gap-b"><svg viewBox="0 0 24 32"><path d="M3 3h12l6 6v20H3z" fill="#f4f8ff" stroke="#4860a0"/><circle cx="12" cy="19" r="5.500" fill="#4aa040"/><circle cx="12" cy="19" r="2.500" fill="#4a80d8"/></svg></span>
                <span class="tab gap-a"><svg viewBox="0 0 24 32"><circle cx="12" cy="17" r="10" fill="#f4f6fa" stroke="#666" stroke-width="1.500"/><path d="M12 10v7h6" stroke="#222" stroke-width="1.500" fill="none"/></svg></span>
                <span class="tab"></span>
            </div>
            <div class="strip"></div>
            <div class="viewport">
                <svg class="model" viewBox="274 441 811 358">
                    <g stroke="#12456f" stroke-width=".6" stroke-linejoin="round">
                        <path d="M355 767L508 732 543 713 541 727 546 738 555 746 563 748 718 710 727 705 778 662 785 640 836 687 363 798z" fill="#0c83dc"/>
                        <path d="M349 745L502 710 508 732 355 767z" fill="#00a9f5"/>
                        <path d="M349 745L355 767 363 798 357 775z" fill="#0a6cc0"/>
                        <path d="M502 710C515 707 526 700 535 692L543 713C532 722 520 728 508 732z" fill="#1ba0ef"/>
                        <path d="M535 692L695 550 712 563 543 713z" fill="#1b8fe8"/>
                        <path d="M543 713L712 563 706 574 698 578 544 716z" fill="#0d77cc"/>
                        <path d="M712 563L728 580C722 576 712 574 706 574z" fill="#1b8fe8"/>
                        <path d="M543 723C548 724 553 725 558 725L563 748C552 746 540 738 543 723z" fill="#14a4f2"/>
                        <path d="M558 725L713 689 718 710 563 748z" fill="#00aaf6"/>
                        <path d="M713 689L720 685 727 705 718 710z" fill="#1da0ef"/>
                        <path d="M720 685L772 640 778 662 727 705z" fill="#1b8fe8"/>
                        <path d="M772 640L775 633C783 640 788 650 778 662z" fill="#1b8fe8"/>
                        <path d="M681 513L832 668 836 687 785 640 775 632 728 580 712 563 695 550 687 537z" fill="#1e90ea"/>
                    </g>
                    <path d="M681 513L685 536" stroke="#12456f" stroke-width=".6"/>
                    <path d="M335 680L349 745 357 775M346 727L407 714 426 790 365 804 346 727" fill="none" stroke="#3434c8" stroke-width="1" stroke-dasharray="3 1"/>
                    <path d="M331 686L335 672 339 685z" fill="#1010c8"/>
                    <text x="327" y="669" class="axis y">Y</text>
                    <path d="M356 787L466 761M413 743L421 783" stroke="#d8dce8" stroke-width="1" fill="none"/>
                    <path d="M464 761L481 758 466 765z" fill="#f4f4f4"/>
                    <text x="482" y="764" class="axis x">X</text>
                </svg>
            </div>
            <div class="rightpanel">
                <span class="dots"></span>
                <span class="layer"><span>1</span><i></i></span>
                <svg class="r" viewBox="0 0 24 24"><path d="M2 5l9-3 9 3-9 3zM2 9l9 3M2 13l9 3M2 17l9 3" fill="#a8d0c8" stroke="#445"/><path d="M11 8h12v15H11z" fill="#d8d8f4" stroke="#5050a0"/><path d="M13 11h3v3h-3zM13 16h3v3h-3zM18 11h3M18 16h3" fill="#445" stroke="#445"/></svg>
                <span class="r-rule"></span>
                <svg class="r" viewBox="0 0 24 24"><use href="#plane2"/><path d="M12 7v10" stroke="#e01414" stroke-width="1.600"/><path d="M9 14h6l-3 4z" fill="#e01414"/></svg>
                <svg class="r" viewBox="0 0 24 24"><use href="#plane2"/><path d="M8 8h8v9H8z" fill="#d0d8e8" stroke="#556"/></svg>
                <svg class="r" viewBox="0 0 24 24"><use href="#axes"/><path d="M14 12l8-10 2 2-8 9z" fill="#2a44d0"/><circle cx="13" cy="14" r="2" fill="#f4e8b0"/></svg>
                <svg class="r" viewBox="0 0 24 24"><path d="M4 2l4 18 12 2M4 2l16 10v10M8 20l12-8" fill="none" stroke="#c85050"/><path d="M2 1h4v4H2zM2 18h4v4H2zM19 20h4v4h-4zM19 9h4v4h-4z" fill="none" stroke="#555"/><circle cx="10" cy="8" r="2" fill="#d8141c"/><circle cx="13" cy="14" r="2" fill="#d8141c"/></svg>
                <svg class="r" viewBox="0 0 24 24"><use href="#axes"/></svg>
                <svg class="r" viewBox="0 0 24 24"><path d="M3 14l5-4M3 14v8" stroke="#888" stroke-width="1.300"/><path d="M10 14l10-3M10 14l5-10M10 14l-2 5" stroke="#d84040" stroke-width="1.300"/><path d="M2 6c3-4 7-5 10-3" stroke="#e89020" stroke-width="2.400" fill="none"/></svg>
                <svg class="r r-gap" viewBox="0 0 24 24"><path d="M12 2v10M14 12l8-3M10 13l-8 7" stroke="#2030c0" stroke-width="1.300"/><path d="M5 16c5-8 14-6 15-1-3 5-11 7-15 1z" fill="#7aa8d8"/></svg>
                <svg class="r" viewBox="0 0 24 24"><circle cx="12" cy="12" r="10" fill="#d8e8f0" stroke="#e8a030"/><circle cx="14" cy="12" r="5" fill="#c03030" stroke="#224"/></svg>
                <svg class="r r-last" viewBox="0 0 24 24"><path d="M3 3l6 6-3 2v11L2 18z" fill="#1c9c3c"/><path d="M5 13l5 4-5 5z" fill="#e01414"/><path d="M14 4l9 8-9 8-6-8z" fill="#a8a8c0" stroke="#333"/><path d="M14 8l-3 4 3 4z" fill="#fff"/></svg>
            </div>
        </div>
    </div>

    <div class="watermark">
        <svg class="wm-logo" viewBox="0 0 100 112">
            <path d="M50 3l45 26v54l-45 26L5 83V29z" fill="#6699cc" stroke="#fff" stroke-width="3"/>
            <path d="M50 3l45 26v54L62 102C76 86 86 60 68 36 63 24 57 12 50 3z" fill="#6bbde6"/>
            <path d="M5 60c10 20 24 34 45 46l20-8C58 86 45 80 38 74L24 70z" fill="#6bbde6"/>
            <path d="M50 3c8 12 14 22 18 34M5 60c14-26 30-30 45-34M95 54C80 76 60 84 36 80" fill="none" stroke="#cfe4f4" stroke-width="1"/>
            <path d="M50 31l22 12.500v25L50 81 28 68.500v-25z" fill="#fff"/>
            <path d="M50 36l18 10-18 10-18-10z" fill="#6699cc"/>
            <path d="M32 48l17 10v19l-17-10z" fill="#6699cc"/>
            <path d="M51 58l17-10v19l-17 10z" fill="#6bbde6"/>
        </svg>
        <div class="wm-text">
            <div class="wm-big">3D世界网</div>
            <div class="wm-small">WWW.3DSJW.COM</div>
        </div>
    </div>
</div>
</body>
</html>
```

FILE: styles.css
```css
* {
    box-sizing: border-box;
}

html, body {
    margin: 0;
    padding: 0;
    height: 100%;
    background: #fff;
    overflow: hidden;
}

.defs {
    display: block;
}

.page {
    position: relative;
    width: 1312px;
    height: 799px;
    overflow: hidden;
    font-family: "Noto Sans CJK SC", "Liberation Sans", sans-serif;
}

/* document headings */
.doc-title {
    display: flex;
    align-items: center;
    height: 62px;
    margin: 0;
    padding-left: 173px;
    font-size: 57px;
    font-weight: 300;
    color: #111;
    white-space: nowrap;
}

.doc-num {
    width: 67px;
    font-family: "Liberation Serif", serif;
    font-size: 54px;
    font-weight: bold;
}

.doc-step {
    display: flex;
    align-items: center;
    height: 44px;
    margin: 84px 0 0;
    padding-left: 37px;
    font-size: 37.8px;
    font-weight: 300;
    color: #111;
    white-space: nowrap;
}

.step-num {
    width: 65px;
    font-family: "Liberation Serif", serif;
    font-size: 36px;
}

/* the NX window */
.nx {
    display: flex;
    flex-direction: column;
    width: 913px;
    height: 584px;
    margin: 25px 0 0 236px;
    background: #dcdcdc;
    border-left: 2px solid #222;
    border-right: 4px solid #0a0a0a;
    filter: blur(.3px);
    font-size: 11px;
    color: #333;
}

.titlebar {
    display: flex;
    align-items: center;
    flex: none;
    height: 26px;
    margin-left: -2px;
    padding: 1px 0 0 4px;
    background: linear-gradient(#9a9a9a 0, #4a4a4a 3px, #141414 8px, #141414 100%);
    color: #e4e4e4;
    white-space: nowrap;
}

.logo {
    flex: none;
    width: 17px;
    height: 16px;
    margin-right: 3px;
}

.title-text {
    flex: none;
    width: 742px;
    font-size: 11.3px;
    letter-spacing: .3px;
    word-spacing: 1px;
}

.siemens {
    flex: none;
    width: 81px;
    font-family: "Liberation Sans", sans-serif;
    font-weight: bold;
    font-size: 11px;
    letter-spacing: 1.2px;
    color: #f2f2f2;
}

.winbtn {
    display: flex;
    align-items: center;
    justify-content: center;
    flex: none;
    width: 17px;
    height: 18px;
    margin-right: 4px;
    border-radius: 2px;
    background: linear-gradient(#8a8a8a, #3c3c3c);
    border: 1px solid #555;
    color: #fff;
}

.winbtn.close {
    background: linear-gradient(#f09070, #d84820);
    font-size: 12px;
    font-weight: bold;
}

.g-min {
    width: 7px;
    height: 3px;
    margin-top: 8px;
    background: #fff;
}

.g-max {
    width: 11px;
    height: 10px;
    border: 1px solid #ddd;
    border-top-width: 3px;
}

.menubar {
    display: flex;
    align-items: center;
    flex: none;
    height: 24px;
    padding-left: 4px;
    gap: 11.3px;
    border-bottom: 1px solid #c4c4c4;
    white-space: nowrap;
}

.menubar .grip {
    margin-right: -12px;
}

.menu-logo {
    flex: none;
    width: 15px;
    height: 15px;
    margin-right: -6px;
}

u {
    text-decoration: underline;
    font-size: 11px;
}

.m {
    color: #333;
}

.m-gap {
    margin-left: 7px;
}

.mdi {
    display: flex;
    gap: 2px;
    margin-left: auto;
    margin-right: 6px;
}

.mdi-btn {
    display: flex;
    align-items: center;
    justify-content: center;
    width: 16px;
    height: 16px;
    border: 1px solid #8a8a8a;
    border-radius: 3px;
    background: #eee;
    font-size: 10px;
    color: #555;
}

/* toolbars */
.bar {
    display: flex;
    align-items: center;
    flex: none;
    height: 32px;
    padding-left: 4px;
    border-top: 1px solid #f0f0f0;
    border-bottom: 1px solid #bcbcbc;
    background: #dcdcdc;
    white-space: nowrap;
}

.grip {
    flex: none;
    width: 3px;
    height: 24px;
    margin-right: 1px;
    background-image: radial-gradient(#8a8a8a 40%, transparent 45%);
    background-size: 3px 4px;
}

.i {
    flex: none;
    width: 24px;
    height: 24px;
    margin: 0 2.5px;
}

.i.tight {
    margin: 0;
}

.i.s {
    width: 17px;
    height: 17px;
    margin: 0 2px;
}

.i.s.first {
    margin: 0 0 0 -2px;
}

.i.push-a {
    margin-left: 6px;
}

.i.m-x3 {
    margin: 0 3px;
}

.i.m-r4 {
    margin-right: 4px;
}

.i.m-r3 {
    margin-right: 3px;
}

.i.m-l1 {
    margin-left: 1px;
}

.caret.m-l3 {
    margin-left: 3px;
}

.dim {
    opacity: .42;
    filter: grayscale(.5);
}

.dim2 {
    opacity: .6;
}

.dim3 {
    opacity: .8;
}

.caret {
    display: flex;
    align-items: center;
    justify-content: center;
    flex: none;
    width: 12px;
}

.caret.nar {
    width: 10px;
}

.caret::before {
    content: "";
    border-left: 3px solid transparent;
    border-right: 3px solid transparent;
    border-top: 3px solid #222;
}

.caret.low {
    align-self: flex-end;
    padding-bottom: 7px;
}

.caret.far {
    margin-left: auto;
    margin-right: 2px;
}

.sep {
    flex: none;
    align-self: stretch;
    width: 2px;
    margin: 1px 2px;
    border-left: 1px solid #b8b8b8;
    border-right: 1px solid #f6f6f6;
}

.sep.pull {
    margin-right: 0;
}

.btn-label {
    flex: none;
    width: 22px;
}

.letter {
    flex: none;
    width: 29px;
    text-align: center;
    font-family: "Liberation Serif", serif;
    font-size: 22px;
    font-weight: bold;
    color: #111;
}

.search {
    display: flex;
    align-items: center;
    justify-content: space-between;
    flex: none;
    width: 132px;
    height: 21px;
    margin-left: 17px;
    padding: 0 2px 0 3px;
    background: #fff;
    border: 1px solid #b8b8b8;
    border-radius: 2px;
    color: #a8a8a8;
}

.mag {
    width: 16px;
    height: 16px;
}

.chev {
    display: flex;
    flex-direction: column;
    align-items: center;
    justify-content: space-between;
    flex: none;
    width: 11px;
    height: 26px;
    margin-left: 1px;
}

.chev.far {
    margin-left: 39px;
}

.chev.near {
    margin-left: 12px;
}

.chev.end {
    margin-left: auto;
    margin-right: 3px;
}

.chev b {
    font-family: "Liberation Sans", sans-serif;
    font-size: 11px;
    line-height: 11px;
    color: #222;
}

.chev em {
    border-left: 3px solid transparent;
    border-right: 3px solid transparent;
    border-top: 3px solid #222;
    margin-bottom: 4px;
}

.sq-done {
    flex: none;
    width: 22px;
    height: 22px;
    margin-left: 4px;
    background: repeating-linear-gradient(45deg, #7c8f9a 0 2px, #98a8b2 2px 4px);
}

.done-label {
    flex: none;
    width: 52px;
    margin-left: 3px;
    color: #aaa;
}

.link-btn {
    display: flex;
    align-items: center;
    justify-content: center;
    flex: none;
    width: 28px;
    height: 28px;
    margin-left: 2px;
    background: #fdfdf4;
    border: 1px solid #666;
    border-radius: 3px;
}

.filter {
    height: 29px;
    padding-left: 5px;
}

.sel {
    display: flex;
    align-items: center;
    justify-content: space-between;
    flex: none;
    height: 18px;
    margin-right: 7px;
    padding-left: 2px;
    background: #fff;
    border: 1px solid #8a8a9a;
    border-radius: 2px;
    letter-spacing: .3px;
    color: #222;
}

.sel-a {
    width: 138px;
}

.sel-b {
    width: 145px;
    margin-right: 3px;
}

.sel i, .layer i {
    position: relative;
    width: 16px;
    height: 100%;
    background: linear-gradient(#cfe4fa, #5f9ad8);
}

.sel i::after, .layer i::after {
    content: "";
    position: absolute;
    left: 3px;
    top: 5px;
    border-left: 5px solid transparent;
    border-right: 5px solid transparent;
    border-top: 5px solid #111;
}

.btn {
    display: flex;
    align-items: center;
    justify-content: center;
    flex: none;
    width: 22px;
    height: 21px;
    background: #f4f4f4;
    border: 1px solid #777;
    border-radius: 3px;
}

.filter .btn .i.s {
    margin: 0;
}

.statusbar {
    display: flex;
    flex: none;
    height: 19px;
    border-bottom: 1px solid #a8a8a8;
}

.st-a {
    width: 406px;
    border-right: 1px solid #f2f2f2;
}

.st-b {
    display: flex;
    align-items: center;
    gap: 4px;
    width: 497px;
}

.st-rule {
    align-self: stretch;
    width: 1px;
    margin-left: 407px;
    background: #f2f2f2;
}

.st-hatch {
    width: 15px;
    height: 15px;
    margin-left: 17px;
    background: repeating-linear-gradient(45deg, #7c8f9a 0 2px, #98a8b2 2px 4px);
}

.st-ico {
    width: 15px;
    height: 15px;
}

/* graphics area */
.main {
    display: flex;
    flex: 1;
    min-height: 0;
}

.leftpanel {
    display: flex;
    flex-direction: column;
    align-items: flex-end;
    flex: none;
    width: 29px;
    overflow: hidden;
    background: #b4b6b6;
}

.gear {
    flex: none;
    width: 14px;
    height: 14px;
    margin: 8px 8px 22px 0;
}

.tab {
    flex: none;
    display: flex;
    align-items: center;
    justify-content: center;
    width: 24px;
    height: 37px;
    margin-bottom: 2px;
    background: #d6d6d6;
    border: 1px solid #a0a0a0;
    border-right: none;
    border-radius: 3px 0 0 3px;
}

.tab svg {
    width: 22px;
    height: 30px;
}

.gap-a {
    margin-top: 11px;
}

.gap-b {
    margin-top: 13px;
}

.strip {
    flex: none;
    width: 7px;
    background: #ececec;
}

.viewport {
    flex: 1;
    background: linear-gradient(#b2b5b5, #dadcdc);
}

.model {
    display: block;
    width: 811px;
    height: 358px;
}

.axis {
    font-family: "Liberation Sans", sans-serif;
    font-size: 13px;
}

.axis.y {
    fill: #3434c8;
}

.axis.x {
    fill: #f0f0f0;
}

.nx5 {
    font-family: "Liberation Sans", sans-serif;
    font-size: 6px;
    font-weight: bold;
    fill: #d01818;
}

.uv {
    font-family: "Liberation Sans", sans-serif;
    font-size: 7px;
    font-weight: bold;
    fill: #222;
}

.rightpanel {
    display: flex;
    flex-direction: column;
    align-items: center;
    flex: none;
    width: 59px;
    padding-top: 25px;
    background: #e2e2e2;
    border-left: 1px solid #eee;
}

.dots {
    flex: none;
    width: 51px;
    height: 3px;
    background-image: radial-gradient(#8a8a8a 40%, transparent 45%);
    background-size: 4px 3px;
}

.layer {
    display: flex;
    justify-content: space-between;
    align-items: center;
    flex: none;
    width: 47px;
    height: 18px;
    margin: 4px 4px 0 0;
    padding-left: 3px;
    background: #fff;
    border: 1px solid #777;
    border-radius: 3px;
}

.r {
    flex: none;
    width: 22px;
    height: 22px;
    margin-bottom: 7px;
}

.layer + .r {
    margin-top: 8px;
    margin-bottom: 5px;
}

.r-rule {
    flex: none;
    width: 54px;
    height: 1px;
    margin-bottom: 7px;
    background: #c4c4c4;
}

.r-gap {
    margin-bottom: 4px;
}

.r-last {
    margin-top: 10px;
}

/* watermark over the page */
.watermark {
    position: absolute;
    left: 1008px;
    top: 694px;
    display: flex;
    align-items: flex-start;
}

.wm-logo {
    flex: none;
    width: 90px;
    height: 101px;
}

.wm-text {
    margin: 13px 0 0 3px;
    color: #7ccbf2;
}

.wm-big {
    font-size: 48px;
    font-weight: 700;
    line-height: 52px;
    white-space: nowrap;
    text-shadow: 1px 0 #fff, -1px 0 #fff, 0 1px #fff, 0 -1px #fff;
}

.wm-small {
    margin: 2px 0 0 2px;
    font-family: "DejaVu Sans", sans-serif;
    font-size: 14px;
    font-weight: bold;
    line-height: 14px;
    letter-spacing: 4.500px;
    white-space: nowrap;
    text-shadow: 1px 0 #fff, -1px 0 #fff, 0 1px #fff, 0 -1px #fff;
}
```
